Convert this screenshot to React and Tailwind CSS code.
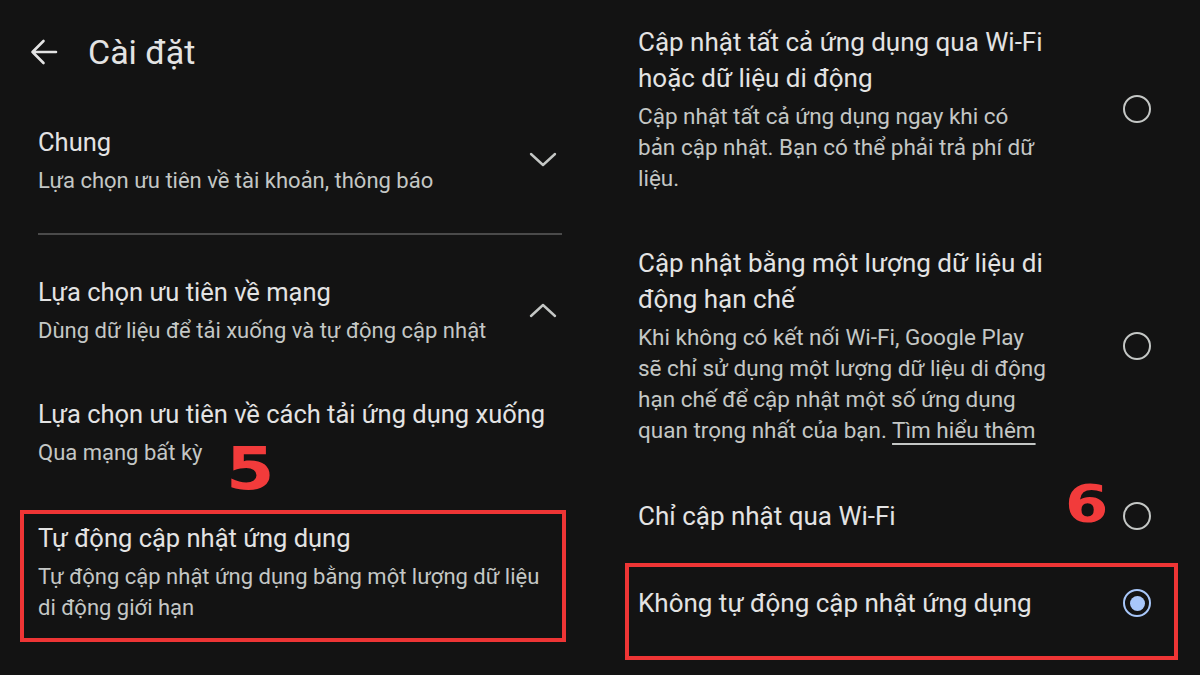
import React from 'react';

const Chevron = ({ up }) => (
    <svg width="28" height="16" viewBox="0 0 28 16" fill="none" className="shrink-0">
        <polyline
            points={up ? '2,14 14,3 26,14' : '2,2 14,13 26,2'}
            stroke="#c4c7c5"
            strokeWidth="2.4"
            strokeLinecap="round"
            strokeLinejoin="round"
        />
    </svg>
);

const BackArrow = () => (
    <svg width="28" height="28" viewBox="0 0 28 28" fill="none" className="shrink-0">
        <path
            d="M2.5 14H26M2.5 14L13.5 3M2.5 14L13.5 25"
            stroke="#e3e3e3"
            strokeWidth="2.6"
            strokeLinecap="round"
            strokeLinejoin="round"
        />
    </svg>
);

const Radio = ({ checked }) =>
    checked ? (
        <div className="w-[28px] h-[28px] shrink-0 rounded-full border-[2.5px] border-[#a8c7fa] flex items-center justify-center">
            <div className="w-[15px] h-[15px] rounded-full bg-[#a8c7fa]" />
        </div>
    ) : (
        <div className="w-[28px] h-[28px] shrink-0 rounded-full border-[2.5px] border-[#c4c7c5]" />
    );

const Title = ({ right, children }) => (
    <div
        className={
            right
                ? 'text-[26px] leading-[36px] text-[#e3e3e3] whitespace-nowrap'
                : 'text-[25.5px] leading-[36px] text-[#e3e3e3] whitespace-nowrap'
        }
    >
        {children}
    </div>
);

const Sub = ({ right, children }) => (
    <div
        className={
            right
                ? 'mt-[5px] text-[22.5px] leading-[31px] text-[#c4c7c5] whitespace-nowrap'
                : 'mt-[5px] text-[22px] leading-[31px] text-[#c4c7c5] whitespace-nowrap'
        }
    >
        {children}
    </div>
);

const App = () => {
    return (
        <div
            className="w-[1200px] h-[675px] bg-[#131313] flex overflow-hidden"
            style={{ fontFamily: 'Roboto, "Noto Sans", sans-serif' }}
        >
            {/* left: settings list */}
            <div className="relative w-[600px] pl-[38px]">
                <div className="h-[104px] flex items-center -ml-[8px]">
                    <BackArrow />
                    <span className="ml-[30px] text-[34px] text-[#e3e3e3]">Cài đặt</span>
                </div>

                <div className="mt-[20px] w-[524px] flex items-center justify-between">
                    <div>
                        <Title>Chung</Title>
                        <Sub>Lựa chọn ưu tiên về tài khoản, thông báo</Sub>
                    </div>
                    <div className="mr-[5px]">
                        <Chevron />
                    </div>
                </div>

                <div className="mt-[37px] w-[524px] h-[2px] bg-[#4a4a4a]" />

                <div className="mt-[39px] w-[524px] flex items-center justify-between">
                    <div>
                        <Title>Lựa chọn ưu tiên về mạng</Title>
                        <Sub>Dùng dữ liệu để tải xuống và tự động cập nhật</Sub>
                    </div>
                    <div className="mr-[5px]">
                        <Chevron up />
                    </div>
                </div>

                <div className="mt-[50px]">
                    <Title>Lựa chọn ưu tiên về cách tải ứng dụng xuống</Title>
                    <Sub>Qua mạng bất kỳ</Sub>
                </div>

                <div
                    className="absolute left-[226px] top-[440px] text-[58px] leading-none font-bold text-[#f23b3b] scale-x-[1.2] origin-left"
                    style={{ fontFamily: '"DejaVu Sans", sans-serif' }}
                >
                    5
                </div>

                <div className="mt-[42px] -ml-[18px] w-[546px] border-4 border-[#ee3535] pl-[14px] pt-[6px] pb-[15px]">
                    <Title>Tự động cập nhật ứng dụng</Title>
                    <Sub>
                        Tự động cập nhật ứng dụng bằng một lượng dữ liệu
                        <br />
                        di động giới hạn
                    </Sub>
                </div>
            </div>

            {/* right: update options */}
            <div className="relative w-[600px] pl-[38px] pr-[49px]">
                <div className="mt-[24px] flex items-center justify-between">
                    <div>
                        <Title right>
                            Cập nhật tất cả ứng dụng qua Wi-Fi
                            <br />
                            hoặc dữ liệu di động
                        </Title>
                        <Sub right>
                            Cập nhật tất cả ứng dụng ngay khi có
                            <br />
                            bản cập nhật. Bạn có thể phải trả phí dữ
                            <br />
                            liệu.
                        </Sub>
                    </div>
                    <Radio />
                </div>

                <div className="mt-[51px] flex items-center justify-between">
                    <div>
                        <Title right>
                            Cập nhật bằng một lượng dữ liệu di
                            <br />
                            động hạn chế
                        </Title>
                        <Sub right>
                            Khi không có kết nối Wi-Fi, Google Play
                            <br />
                            sẽ chỉ sử dụng một lượng dữ liệu di động
                            <br />
                            hạn chế để cập nhật một số ứng dụng
                            <br />
                            quan trọng nhất của bạn.{' '}
                            <span className="underline underline-offset-[5px] decoration-[1.5px]">Tìm hiểu thêm</span>
                        </Sub>
                    </div>
                    <Radio />
                </div>

                <div className="mt-[52px] flex items-center justify-between">
                    <Title right>Chỉ cập nhật qua Wi-Fi</Title>
                    <Radio />
                </div>

                <div
                    className="absolute left-[465px] top-[478px] text-[52px] leading-none font-bold text-[#f23b3b] scale-x-[1.2] origin-left"
                    style={{ fontFamily: '"DejaVu Sans", sans-serif' }}
                >
                    6
                </div>

                <div className="mt-[29px] -ml-[13px] w-[553px] h-[97px] border-4 border-[#ee3535] pl-[9px] pr-[23px] pt-[18px] flex items-start justify-between">
                    <Title right>Không tự động cập nhật ứng dụng</Title>
                    <div className="mt-[4px]">
                        <Radio checked />
                    </div>
                </div>
            </div>
        </div>
    );
};

export default App;
